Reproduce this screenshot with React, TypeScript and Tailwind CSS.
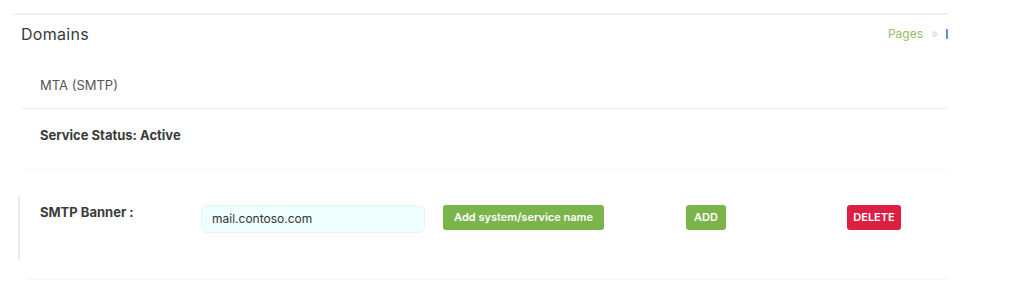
export default function App() {
  return (
    <div
      className="w-[1032px] h-[302px] bg-white overflow-hidden pt-[13px]"
      style={{ fontFamily: 'Inter, "Open Sans", "Liberation Sans", sans-serif' }}
    >
      <div className="ml-[13px] w-[935px] border-t-2 border-[#f0f0fb]">
        {/* Page header */}
        <div className="flex items-center justify-between pl-[8px] pt-[2px] h-[36px]">
          <h1 className="text-[16px] text-[#3a3a3a] tracking-[0.3px]">Domains</h1>
          <div className="flex items-center gap-[8px] text-[12px]">
            <span className="text-[#8fc06a]">Pages</span>
            <span className="text-[#c5e0ef]">»</span>
            <span className="w-[2px] h-[10px] bg-[#5f8fd8]"></span>
          </div>
        </div>

        {/* Card */}
        <div className="ml-[8px] mt-[13px]">
          <div className="h-[45px] flex items-center pl-[19px] border-b border-[#ececfa]">
            <span className="text-[13px] text-[#555]">MTA (SMTP)</span>
          </div>
          <div className="h-[60px] pl-[19px] pt-[13px]">
            <span className="text-[13px] font-bold text-[#3b3b3b]">Service Status: Active</span>
          </div>

          <div className="ml-[6px] border-t border-b-2 border-[#effdfd] h-[111px] relative">
            <div className="absolute left-[-9px] top-[26px] w-[2px] h-[64px] bg-[#ececf4]"></div>
            <div className="flex items-start pt-[35px]">
              <span className="ml-[13px] w-[161px] text-[13px] font-bold text-[#3b3b3b] leading-[14px]">
                SMTP Banner :
              </span>
              <div className="w-[224px] h-[28px] rounded-[6px] bg-[#effeff] border border-[#e6f3fb] flex items-center pl-[10px] text-[12px] text-[#333]">
                mail.contoso.com
              </div>
              <button className="ml-[18px] h-[25px] w-[161px] rounded-[3px] bg-[#7cb44c] text-white text-[11px] font-semibold">
                Add system/service name
              </button>
              <button className="ml-[82px] h-[25px] w-[40px] rounded-[3px] bg-[#7cb44c] text-white text-[11px] font-semibold">
                ADD
              </button>
              <button className="ml-[121px] h-[25px] w-[54px] rounded-[3px] bg-[#dc1f43] text-white text-[11px] font-semibold">
                DELETE
              </button>
            </div>
          </div>
        </div>
      </div>
    </div>
  );
}
